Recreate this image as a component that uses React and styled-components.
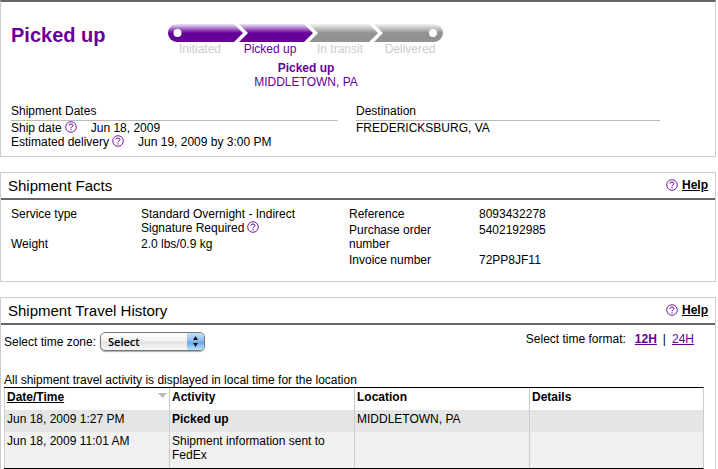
import React from "react";
import styled, { createGlobalStyle } from "styled-components";

const purple = "#660099";

const GlobalStyle = createGlobalStyle`
  * { box-sizing: border-box; }
  body {
    margin: 0;
    background: #fff;
    color: #000;
    font: 12px/14px "Liberation Sans", Arial, sans-serif;
    overflow: hidden;
  }
`;

const Page = styled.main`
  display: flex;
  flex-direction: column;
  gap: 15px;
  padding-right: 2px;
`;

const Panel = styled.section`
  border: 1px solid #ccc;
`;

const SummaryPanel = styled(Panel)`
  border-top: 2px solid #666;
  padding: 21px 55px 7px 10px;
`;

const StatusRow = styled.div`
  display: flex;
  align-items: flex-start;
`;

const StatusTitle = styled.h1`
  margin: 0;
  width: 154px;
  color: ${purple};
  font-size: 20px;
  line-height: 24px;
`;

const Tracker = styled.div`
  width: 280px;
  color: ${purple};
  text-align: center;
`;

const TrackSvg = styled.svg`
  display: block;
  width: 100%;
  height: 19px;
`;

const Steps = styled.ol`
  display: grid;
  grid-template-columns: repeat(4, 1fr);
  margin: 0;
  padding: 0;
  list-style: none;
`;

const Step = styled.li`
  color: ${(p) => (p.$current ? purple : "#ccc")};
`;

const CurrentPlace = styled.p`
  margin: 5px 0 0;
  padding-left: 2px;
`;

const DateGrid = styled.div`
  display: grid;
  grid-template-columns: 327fr 304fr;
  column-gap: 18px;
  margin-top: 15px;
`;

const ColumnTitle = styled.h2`
  margin: 0;
  padding-bottom: 2px;
  border-bottom: 1px solid #bbb;
  font-size: 12px;
  font-weight: normal;
`;

const DateLine = styled.div`
  display: flex;
  align-items: flex-start;
`;

const DateValue = styled.span`
  margin-left: 14px;
`;

const IconButton = styled.button`
  display: inline-block;
  vertical-align: top;
  margin: 0 0 0 3px;
  padding: 0;
  border: 0;
  background: none;
  line-height: 0;
`;

const PanelHeader = styled.header`
  display: flex;
  justify-content: space-between;
  align-items: flex-start;
  height: 27px;
  padding: 4px 7px 0;
  border-bottom: 2px solid #666;
`;

const PanelTitle = styled.h2`
  margin: 0;
  font-size: 15px;
  line-height: 18px;
  font-weight: normal;
`;

const HelpLink = styled.a`
  display: flex;
  align-items: center;
  gap: 4px;
  color: #000;
  font-weight: bold;
  line-height: 16px;
`;

const FactsGrid = styled.div`
  display: grid;
  grid-template-columns: 1fr 1fr;
  padding: 6px 28px 13px 10px;
`;

const FactList = styled.dl`
  margin: 0;
`;

const FactRow = styled.div`
  display: grid;
  grid-template-columns: 100px minmax(0, 170px);
  column-gap: 30px;
  padding: 1px 0;
`;

const FactName = styled.dt``;

const FactValue = styled.dd`
  margin: 0;
`;

const Controls = styled.div`
  display: flex;
  justify-content: space-between;
  align-items: flex-start;
  padding: 7px 21px 0 3px;
`;

const ZoneLabel = styled.label`
  display: flex;
  align-items: center;
  gap: 4px;
`;

const SelectBox = styled.span`
  display: grid;
  width: 105px;
  height: 19px;
  margin-bottom: 1px;
  overflow: hidden;
  border: 1px solid #777;
  border-radius: 5px;
  background: linear-gradient(#fff, #f1f1f1 48%, #e2e2e2 52%, #f8f8f8);
  box-shadow: 0 1px 1px #aaa;
`;

const ZoneSelect = styled.select`
  grid-area: 1 / 1;
  appearance: none;
  width: 100%;
  height: 17px;
  padding: 0 20px 0 7px;
  border: 0;
  background: none;
  color: #000;
  font: 600 11px/17px "Open Sans", sans-serif;
`;

const SelectCap = styled.span`
  grid-area: 1 / 1;
  justify-self: end;
  width: 17px;
  height: 17px;
  background: linear-gradient(#c6defa, #8dbcf0 48%, #66a5ea 52%, #b4e2ff);
  pointer-events: none;
`;

const FormatBar = styled.div`
  display: flex;
`;

const FormatLink = styled.a`
  color: ${purple};
  font-weight: ${(p) => (p.$active ? "bold" : "normal")};
`;

const FormatLabel = styled.span`
  margin-right: 9px;
`;

const Divider = styled.span`
  margin: 0 6px;
`;

const Note = styled.p`
  margin: 21px 0 0;
  padding-left: 3px;
`;

const HistoryTable = styled.table`
  width: calc(100% - 14px);
  margin-left: 3px;
  border-collapse: separate;
  border-spacing: 0;
  border-top: 1px solid #000;
  border-bottom: 1px solid #000;
  border-right: 1px solid #ccc;
  table-layout: fixed;
`;

const Col = styled.col`
  width: ${(p) => p.$width};
`;

const HeadCell = styled.th`
  padding: 2px 2px 6px;
  border-left: 1px solid #ccc;
  text-align: left;
  vertical-align: top;
`;

const Row = styled.tr`
  background: ${(p) => (p.$shaded ? "#e5e5e5" : "#f1f1f1")};
`;

const Cell = styled.td`
  padding: 2px 22px 6px 2px;
  border-left: 1px solid #ccc;
  vertical-align: top;
  font-weight: ${(p) => (p.$strong ? "bold" : "normal")};
`;

const SortHead = styled.span`
  display: flex;
  justify-content: space-between;
`;

const SortButton = styled.button`
  padding: 0;
  border: 0;
  background: none;
  color: inherit;
  font: inherit;
  text-decoration: underline;
`;

const SortMark = styled.svg`
  display: block;
  margin-top: 3px;
`;

function QuestionIcon() {
  return (
    <svg width="12" height="12" viewBox="0 0 12 12" fill="none" stroke={purple} aria-hidden="true">
      <circle cx="6" cy="6" r="5.3" strokeWidth="0.9" />
      <path d="M3.9 4.6Q4 3 6 3T8 4.6C8 5.8 6 5.8 6 7.4M6 8.2v1.2" />
    </svg>
  );
}

function HelpButton({ label }) {
  return (
    <IconButton type="button" aria-label={label}>
      <QuestionIcon />
    </IconButton>
  );
}

function Track() {
  return (
    <TrackSvg viewBox="0 0 280 19" aria-hidden="true">
      <defs>
        <linearGradient id="done" x1="0" y1="0" x2="0" y2="1">
          <stop offset="0" stopColor="#efe5f5" />
          <stop offset="0.5" stopColor={purple} />
        </linearGradient>
        <linearGradient id="todo" x1="0" y1="0" x2="0" y2="1">
          <stop offset="0" stopColor="#f2f2f2" />
          <stop offset="0.5" stopColor="#929292" />
        </linearGradient>
      </defs>
      <path fill="url(#done)" d="M12 1H69L78 10L69 19H12A9 9 0 0 1 12 1Z" />
      <path fill="url(#done)" d="M74 1H139L148 10L139 19H74L83 10Z" />
      <path fill="url(#todo)" d="M144 1H204L213 10L204 19H144L153 10Z" />
      <path fill="url(#todo)" d="M209 1H269A9 9 0 0 1 269 19H209L218 10Z" />
      <circle cx="12.5" cy="10" r="4" fill="#fff" />
      <circle cx="268" cy="10" r="4" fill="#fff" />
    </TrackSvg>
  );
}

function Header({ title }) {
  return (
    <PanelHeader>
      <PanelTitle>{title}</PanelTitle>
      <HelpLink href="#help">
        <QuestionIcon />
        Help
      </HelpLink>
    </PanelHeader>
  );
}

function Facts({ items }) {
  return (
    <FactList>
      {items.map(([name, value, help]) => (
        <FactRow key={name}>
          <FactName>{name}</FactName>
          <FactValue>
            {value}
            {help && <HelpButton label={`About ${name}`} />}
          </FactValue>
        </FactRow>
      ))}
    </FactList>
  );
}

const steps = ["Initiated", "Picked up", "In transit", "Delivered"];

const shipmentFacts = [
  ["Service type", "Standard Overnight - Indirect Signature Required", true],
  ["Weight", "2.0 lbs/0.9 kg"],
];

const referenceFacts = [
  ["Reference", "8093432278"],
  ["Purchase order number", "5402192985"],
  ["Invoice number", "72PP8JF11"],
];

const history = [
  { time: "Jun 18, 2009 1:27 PM", activity: "Picked up", place: "MIDDLETOWN, PA", strong: true },
  { time: "Jun 18, 2009 11:01 AM", activity: "Shipment information sent to FedEx", place: "" },
];

export default function App() {
  return (
    <>
      <GlobalStyle />
      <Page>
        <SummaryPanel>
          <StatusRow>
            <StatusTitle>Picked up</StatusTitle>
            <Tracker>
              <Track />
              <Steps>
                {steps.map((s) => (
                  <Step key={s} $current={s === "Picked up"}>{s}</Step>
                ))}
              </Steps>
              <CurrentPlace>
                <strong>Picked up</strong>
                <br />
                MIDDLETOWN, PA
              </CurrentPlace>
            </Tracker>
          </StatusRow>
          <DateGrid>
            <div>
              <ColumnTitle>Shipment Dates</ColumnTitle>
              <DateLine>
                Ship date
                <HelpButton label="About ship date" />
                <DateValue>Jun 18, 2009</DateValue>
              </DateLine>
              <DateLine>
                Estimated delivery
                <HelpButton label="About estimated delivery" />
                <DateValue>Jun 19, 2009 by 3:00 PM</DateValue>
              </DateLine>
            </div>
            <div>
              <ColumnTitle>Destination</ColumnTitle>
              FREDERICKSBURG, VA
            </div>
          </DateGrid>
        </SummaryPanel>

        <Panel>
          <Header title="Shipment Facts" />
          <FactsGrid>
            <Facts items={shipmentFacts} />
            <Facts items={referenceFacts} />
          </FactsGrid>
        </Panel>

        <Panel>
          <Header title="Shipment Travel History" />
          <Controls>
            <ZoneLabel>
              Select time zone:
              <SelectBox>
                <ZoneSelect defaultValue="Select">
                  <option>Select</option>
                </ZoneSelect>
                <SelectCap>
                  <svg width="17" height="17" viewBox="0 0 17 17" aria-hidden="true">
                    <path d="M8.5 3L11 7H6ZM8.5 14L11 10H6Z" fill="#111" />
                  </svg>
                </SelectCap>
              </SelectBox>
            </ZoneLabel>
            <FormatBar>
              <FormatLabel>Select time format:</FormatLabel>
              <FormatLink href="#12h" $active>12H</FormatLink>
              <Divider>|</Divider>
              <FormatLink href="#24h">24H</FormatLink>
            </FormatBar>
          </Controls>
          <Note>All shipment travel activity is displayed in local time for the location</Note>
          <HistoryTable>
            <colgroup>
              <Col $width="165px" />
              <Col $width="185px" />
              <Col $width="175px" />
              <Col $width="auto" />
            </colgroup>
            <thead>
              <tr>
                <HeadCell scope="col">
                  <SortHead>
                    <SortButton type="button">Date/Time</SortButton>
                    <SortMark width="9" height="6" viewBox="0 0 9 6" aria-hidden="true">
                      <path d="M0 0H9L4.5 5Z" fill="#bbb" />
                    </SortMark>
                  </SortHead>
                </HeadCell>
                <HeadCell scope="col">Activity</HeadCell>
                <HeadCell scope="col">Location</HeadCell>
                <HeadCell scope="col">Details</HeadCell>
              </tr>
            </thead>
            <tbody>
              {history.map((h) => (
                <Row key={h.time} $shaded={h.strong}>
                  <Cell>{h.time}</Cell>
                  <Cell $strong={h.strong}>{h.activity}</Cell>
                  <Cell>{h.place}</Cell>
                  <Cell />
                </Row>
              ))}
            </tbody>
          </HistoryTable>
        </Panel>
      </Page>
    </>
  );
}
